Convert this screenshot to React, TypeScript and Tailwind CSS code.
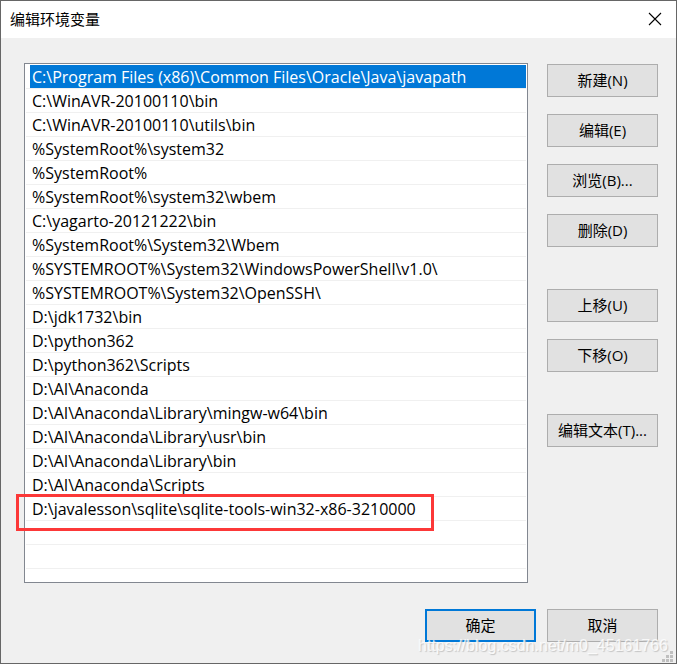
import React from "react";

const paths: string[] = [
  "C:\\Program Files (x86)\\Common Files\\Oracle\\Java\\javapath",
  "C:\\WinAVR-20100110\\bin",
  "C:\\WinAVR-20100110\\utils\\bin",
  "%SystemRoot%\\system32",
  "%SystemRoot%",
  "%SystemRoot%\\system32\\wbem",
  "C:\\yagarto-20121222\\bin",
  "%SystemRoot%\\System32\\Wbem",
  "%SYSTEMROOT%\\System32\\WindowsPowerShell\\v1.0\\",
  "%SYSTEMROOT%\\System32\\OpenSSH\\",
  "D:\\jdk1732\\bin",
  "D:\\python362",
  "D:\\python362\\Scripts",
  "D:\\AI\\Anaconda",
  "D:\\AI\\Anaconda\\Library\\mingw-w64\\bin",
  "D:\\AI\\Anaconda\\Library\\usr\\bin",
  "D:\\AI\\Anaconda\\Library\\bin",
  "D:\\AI\\Anaconda\\Scripts",
  "D:\\javalesson\\sqlite\\sqlite-tools-win32-x86-3210000",
  "",
  "",
];

const buttonGroups: string[][] = [
  ["新建(N)", "编辑(E)", "浏览(B)...", "删除(D)"],
  ["上移(U)", "下移(O)"],
  ["编辑文本(T)..."],
];

function DialogButton({ label, primary = false }: { label: string; primary?: boolean }) {
  return (
    <button
      type="button"
      className={
        primary
          ? "h-[33px] w-[111px] border-2 border-[#0078d7] bg-[#e1e1e1] pb-[2px] whitespace-nowrap"
          : "h-[33px] w-[111px] border border-[#adadad] bg-[#e1e1e1] pb-[2px] whitespace-nowrap"
      }
    >
      {label}
    </button>
  );
}

function PathRow({ text, selected, marked }: { text: string; selected: boolean; marked: boolean }) {
  return (
    <li
      role="option"
      aria-selected={selected}
      className="relative h-6 border-b border-[#f0f0f0] pl-1 whitespace-pre"
    >
      <div className={selected ? "h-full bg-[#0078d7] pl-[2px] text-white" : "h-full pl-[2px]"}>{text}</div>
      {marked && (
        <span className="pointer-events-none absolute -top-[3px] -left-[10px] h-[37px] w-[418px] border-3 border-[#fc3838]" />
      )}
    </li>
  );
}

export default function App() {
  return (
    <div className="relative flex min-h-screen flex-col border border-[#666666] bg-[#f0f0f0] font-['Open_Sans','Noto_Sans_CJK_SC',sans-serif] text-[15px] leading-6 text-black">
      <header className="flex h-[37px] items-center justify-between bg-white pr-[14px] pb-[2px] pl-[9px]">
        <h1>编辑环境变量</h1>
        <button type="button" aria-label="关闭">
          <svg width="14" height="14" viewBox="0 0 14 14" fill="none" stroke="#000" strokeWidth="1.1">
            <path d="M1 1 L13 13 M13 1 L1 13" />
          </svg>
        </button>
      </header>

      <main className="flex flex-1 flex-col pt-[25px] pr-[18px] pb-[21px] pl-[23px]">
        <div className="flex gap-[19px]">
          <ul
            role="listbox"
            aria-label="环境变量"
            className="min-w-0 flex-1 border border-[#828790] bg-white px-px pt-px pb-[13px] text-base leading-6"
          >
            {paths.map((text, i) => (
              <PathRow key={i} text={text} selected={i === 0} marked={i === 18} />
            ))}
          </ul>
          <div className="flex flex-col gap-[42px] pt-px">
            {buttonGroups.map((group) => (
              <div key={group[0]} className="flex flex-col gap-[17px]">
                {group.map((label) => (
                  <DialogButton key={label} label={label} />
                ))}
              </div>
            ))}
          </div>
        </div>
        <div className="mt-auto flex justify-end gap-[11px] pt-[26px]">
          <DialogButton label="确定" primary />
          <DialogButton label="取消" />
        </div>
      </main>

      <svg className="absolute right-[3px] bottom-[1px]" width="11" height="11" viewBox="0 0 11 11" fill="#bfbfbf">
        <path d="M8 0h3v3h-3z M4 4h3v3h-3z M8 4h3v3h-3z M0 8h3v3h-3z M4 8h3v3h-3z M8 8h3v3h-3z" />
      </svg>
      <p className="pointer-events-none absolute right-2 bottom-[5px] font-['Liberation_Sans',Arial,sans-serif] text-base text-white/80 [text-shadow:1px_1px_1px_#c4c4c4]">
        https://blog.csdn.net/m0_45161766
      </p>
    </div>
  );
}
